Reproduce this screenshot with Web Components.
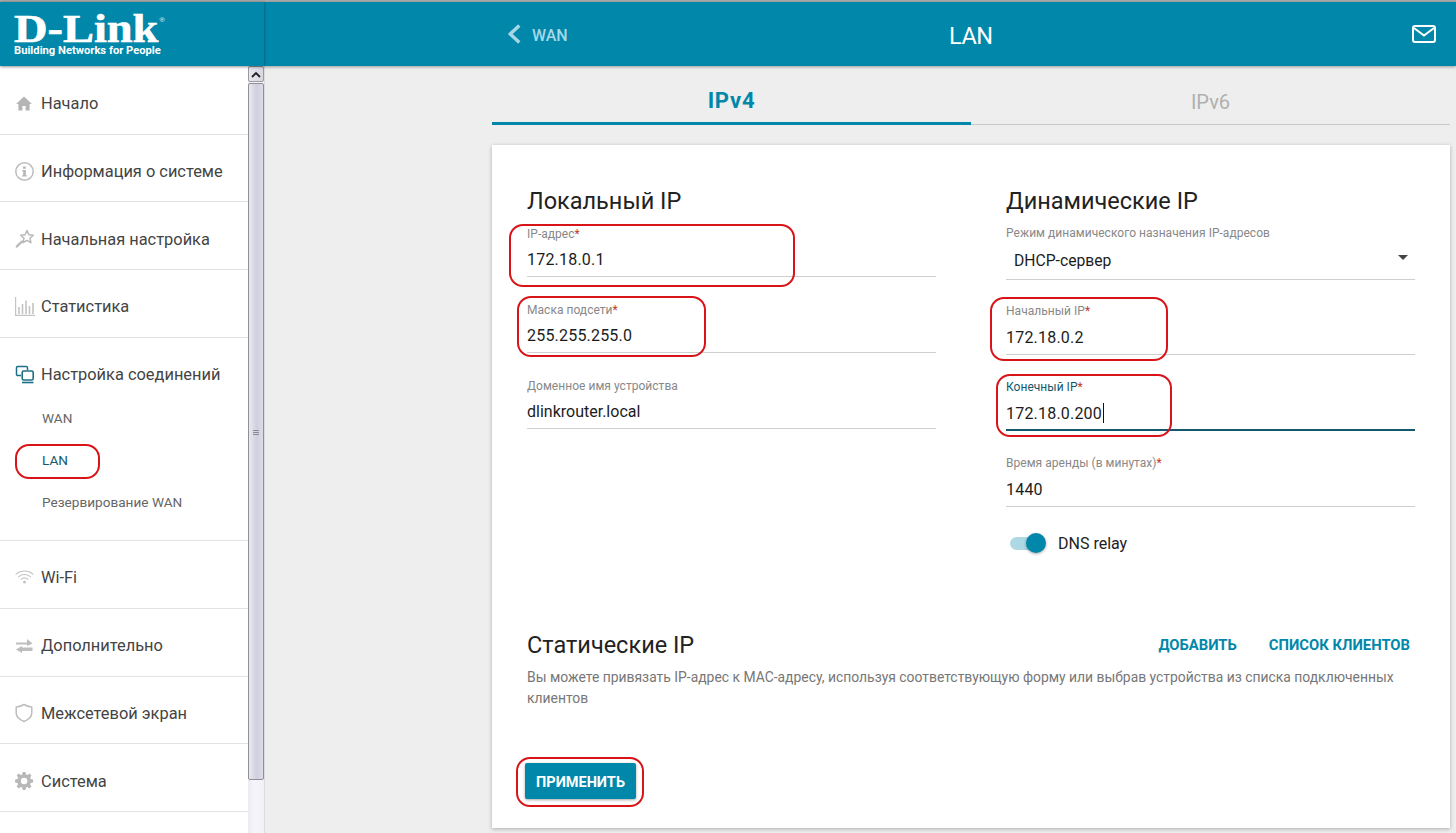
<!DOCTYPE html>
<html lang="ru">
<head>
<meta charset="utf-8">
<title>LAN</title>
<style>
  html, body { margin: 0; height: 100%; overflow: hidden; background: #eeeeee; }
  body { font-family: Roboto, "Noto Sans", sans-serif; position: relative; }
</style>
</head>
<body>
<router-app>
  <top-bar slot="top" back="WAN" title="LAN"></top-bar>

  <side-nav slot="nav">
    <nav-item label="Начало" icon="home"></nav-item>
    <nav-item label="Информация о системе" icon="info"></nav-item>
    <nav-item label="Начальная настройка" icon="star"></nav-item>
    <nav-item label="Статистика" icon="stats"></nav-item>
    <nav-item label="Настройка соединений" icon="conn" open>
      <nav-sub>WAN</nav-sub>
      <nav-sub active>LAN</nav-sub>
      <nav-sub>Резервирование WAN</nav-sub>
    </nav-item>
    <nav-item label="Wi-Fi" icon="wifi"></nav-item>
    <nav-item label="Дополнительно" icon="arrows"></nav-item>
    <nav-item label="Межсетевой экран" icon="shield"></nav-item>
    <nav-item label="Система" icon="gear"></nav-item>
  </side-nav>

  <tab-bar slot="main"></tab-bar>

  <form-card slot="main">
    <form-col slot="left" heading="Локальный IP">
      <form-field label="IP-адрес" required num>172.18.0.1</form-field>
      <form-field label="Маска подсети" required num>255.255.255.0</form-field>
      <form-field label="Доменное имя устройства">dlinkrouter.local</form-field>
    </form-col>
    <form-col slot="right" heading="Динамические IP" style="--extra:1px">
      <form-field label="Режим динамического назначения IP-адресов" select>DHCP-сервер</form-field>
      <form-field label="Начальный IP" required num>172.18.0.2</form-field>
      <form-field label="Конечный IP" required focused num>172.18.0.200</form-field>
      <form-field label="Время аренды (в минутах)" required num>1440</form-field>
      <toggle-switch>DNS relay</toggle-switch>
    </form-col>
  </form-card>

  <red-mark style="left:509px;top:224px;width:286px;height:63px"></red-mark>
  <red-mark style="left:517px;top:296px;width:189px;height:61px"></red-mark>
  <red-mark style="left:15px;top:444px;width:85px;height:35px"></red-mark>
  <red-mark style="left:990px;top:297px;width:178px;height:64px"></red-mark>
  <red-mark style="left:996px;top:374px;width:176px;height:63px"></red-mark>
  <red-mark style="left:516px;top:757px;width:128px;height:50px"></red-mark>
</router-app>

<script>
// menu icons, drawn on a 21x20 box
var ICONS = {
  home: '<path fill="#b5b5b5" d="M9 2.500 1 10h2.400v6.500h4v-4.400h3.200v4.400h4V10H17z"/>',
  info: '<circle cx="9.500" cy="9.500" r="8.700" fill="none" stroke="#bdbdbd" stroke-width="1.500"/><path fill="#b5b5b5" d="M8 4.500h2.800v2.200H8zM7.200 8h3.600v5.200h1v1.300H7.200v-1.300h1V9.300h-1z"/>',
  star: '<path fill="none" stroke="#b8b8b8" stroke-width="1.500" stroke-linejoin="round" d="M12 1.500l1.900 4.200 4.400.5-3.300 3 .9 4.500-3.900-2.300-3.900 2.300.9-4.500-3.300-3 4.400-.5z"/><path stroke="#b8b8b8" stroke-width="2.400" stroke-linecap="round" d="M1.800 17.500 7 12.500"/>',
  stats: '<path fill="none" stroke="#c4c4c4" stroke-width="1.200" d="M.6 0v18.400H20"/><path stroke="#c4c4c4" stroke-width="1.600" d="M4 17V10M7.500 17V7M11 17V3.500M14.500 17V9M18 17V6"/>',
  conn: '<path fill="none" stroke="#1d6f86" stroke-width="1.500" d="M6 10.500H2.800a1.300 1.300 0 0 1-1.300-1.300V2.800a1.300 1.300 0 0 1 1.300-1.300h8.400a1.300 1.300 0 0 1 1.300 1.300V5"/><rect x="7.200" y="6" width="11" height="9" rx="1.500" fill="none" stroke="#1d6f86" stroke-width="1.600"/><path stroke="#1d6f86" stroke-width="1.600" d="M7 17.500h11.500"/>',
  wifi: '<g fill="none" stroke="#c4c4c4" stroke-width="1.100" stroke-linecap="round"><path d="M1 6.200C5.800 2 13.200 2 18 6.200"/><path d="M3.500 8.800c3.500-3 8.500-3 12 0"/><path d="M6 11.300c2-1.700 5-1.700 7 0"/></g><circle cx="9.500" cy="14" r="1.500" fill="#c4c4c4"/>',
  arrows: '<path fill="#bdbdbd" d="M1 6.500h11V3l5.500 4.500L12 10V8.500H1zM17.500 11.500H7V10L1 13.500 7 17v-2h10.500z"/>',
  shield: '<path fill="none" stroke="#bdbdbd" stroke-width="1.500" stroke-linejoin="round" d="M9 1.500c2.300 1.500 4.800 2.200 7.800 2.400v6c0 4-3.300 6.500-7.800 8.600-4.500-2.100-7.800-4.600-7.800-8.600v-6C4.200 3.700 6.700 3 9 1.500z"/>',
  gear: '<path fill="#b8b8b8" fill-rule="evenodd" d="M7.400 0h3.200l.5 2.700 1.600.7L15 1.800l2.200 2.200-1.500 2.300.7 1.600 2.600.5v3.200l-2.600.5-.7 1.600 1.500 2.300-2.200 2.200-2.300-1.600-1.600.7-.5 2.700H7.400l-.5-2.700-1.600-.7L3 18.200.8 16l1.500-2.300-.7-1.600L-1 11.600V8.400l2.600-.5.7-1.600L.8 4 3 1.800l2.300 1.600 1.600-.7zM9 6.400a3.600 3.600 0 1 0 0 7.200 3.600 3.600 0 0 0 0-7.200z" transform="translate(1 1) scale(.9)"/>'
};

// PAGE SHELL
var tplApp = document.createElement("template");
tplApp.innerHTML = `
<style>
  :host { display: flex; flex-direction: column; height: 833px; position: relative; overflow: hidden; background: #eeeeee; }
  .strip { height: 2px; background: #a9a9a9; flex: none; }
  .body { display: flex; flex: 1; min-height: 0; }
  .side { width: 264px; flex: none; display: flex; background: #fff; }
  .main { flex: 1; min-width: 0; padding: 19px 6px 0 228px; box-sizing: border-box; }
  ::slotted(top-bar) { position: relative; z-index: 2; }
</style>
<div class="strip"></div>
<slot name="top"></slot>
<div class="body">
  <div class="side"><slot name="nav"></slot><side-scroll></side-scroll></div>
  <div class="main"><slot name="main"></slot></div>
</div>
<slot></slot>
`;
class RouterApp extends HTMLElement {
  constructor(){
    super();
    this.attachShadow({mode:"open"});
  }
  connectedCallback(){
    this.shadowRoot.appendChild(tplApp.content.cloneNode(true));
  }
}

// HEADER
var tplTop = document.createElement("template");
tplTop.innerHTML = `
<style>
  :host { display: flex; height: 64px; background: #0087aa; color: #fff; box-shadow: 0 1px 3px rgba(0,0,0,.35); flex: none; }
  .brand { width: 264px; box-sizing: border-box; padding: 11px 0 0 14px; flex: none; box-shadow: 1px 0 2px rgba(0,0,0,.22); }
  .logo { font: 700 40px/32px "Liberation Serif", serif; display: flex; align-items: flex-start; transform: scaleX(1.16); transform-origin: 0 0; -webkit-text-stroke: .6px #fff; }
  .logo sup { font: 400 6px/8px "Liberation Sans", sans-serif; margin: 3px 0 0 1px; -webkit-text-stroke: 0; }
  .tag { font: 700 11.200px/12px Roboto, sans-serif; white-space: nowrap; margin-top: 0; }
  .bar { flex: 1; display: flex; align-items: center; padding: 0 20px 0 243px; position: relative; }
  .back { display: flex; align-items: center; gap: 11px; color: #a5d8e6; font: 500 16px Roboto, sans-serif; }
  .back span { margin-top: 2px; }
  .title { flex: 1; text-align: center; font: 400 23.500px Roboto, sans-serif; letter-spacing: -.5px; padding: 3px 38px 0 0; }
  svg { display: block; }
</style>
<div class="brand">
  <div class="logo">D-Link<sup>®</sup></div>
  <div class="tag">Building Networks for People</div>
</div>
<div class="bar">
  <div class="back">
    <svg width="14" height="20" viewBox="0 0 14 20"><path d="M12.300 1.500 3.300 10l9 8.500" fill="none" stroke="#a5d8e6" stroke-width="3.400"/></svg>
    <span id="back"></span>
  </div>
  <div class="title" id="title"></div>
  <svg width="24" height="18" viewBox="0 0 24 18"><rect x="1" y="1" width="22" height="16" rx="2" fill="none" stroke="#fff" stroke-width="2"/><path d="M2 3l10 7.500L22 3" fill="none" stroke="#fff" stroke-width="2"/></svg>
</div>
`;
class TopBar extends HTMLElement {
  constructor(){
    super();
    this.attachShadow({mode:"open"});
  }
  connectedCallback(){
    this.shadowRoot.appendChild(tplTop.content.cloneNode(true));
    this.shadowRoot.querySelector("#back").textContent = this.getAttribute("back");
    this.shadowRoot.querySelector("#title").textContent = this.getAttribute("title");
  }
}

// SIDEBAR
var tplNav = document.createElement("template");
tplNav.innerHTML = `
<style>
  :host { display: flex; flex-direction: column; width: 248px; flex: none; background: #fff; padding-top: 1px; box-sizing: border-box; }
</style>
<slot></slot>
`;
class SideNav extends HTMLElement {
  constructor(){
    super();
    this.attachShadow({mode:"open"});
  }
  connectedCallback(){
    this.shadowRoot.appendChild(tplNav.content.cloneNode(true));
  }
}

var tplItem = document.createElement("template");
tplItem.innerHTML = `
<style>
  :host { display: block; border-bottom: 1px solid #e2e2e2; flex: none; box-sizing: border-box; height: 67.700px; }
  :host([open]) { height: 203.400px; }
  .row { display: flex; align-items: center; height: 66.700px; box-sizing: border-box; padding: 7px 0 0 15px; color: #444; font-size: 16.400px; }
  .ic { width: 26px; flex: none; display: flex; }
  svg { display: block; }
  .subs { margin-top: -7px; }
</style>
<div class="row"><span class="ic"><svg width="21" height="20" viewBox="0 0 21 20"></svg></span><span id="lbl"></span></div>
<div class="subs"><slot></slot></div>
`;
class NavItem extends HTMLElement {
  constructor(){
    super();
    this.attachShadow({mode:"open"});
  }
  connectedCallback(){
    this.shadowRoot.appendChild(tplItem.content.cloneNode(true));
    this.shadowRoot.querySelector("#lbl").textContent = this.getAttribute("label");
    this.shadowRoot.querySelector("svg").innerHTML = ICONS[this.getAttribute("icon")];
  }
}

var tplSub = document.createElement("template");
tplSub.innerHTML = `
<style>
  :host { display: flex; align-items: center; height: 42px; padding-left: 42px; color: #666; font-size: 13.600px; }
  :host([active]) { color: #14596b; }
</style>
<slot></slot>
`;
class NavSub extends HTMLElement {
  constructor(){
    super();
    this.attachShadow({mode:"open"});
  }
  connectedCallback(){
    this.shadowRoot.appendChild(tplSub.content.cloneNode(true));
  }
}

// the browser scrollbar beside the menu
var tplScroll = document.createElement("template");
tplScroll.innerHTML = `
<style>
  :host { display: flex; flex-direction: column; width: 16px; flex: none; background: linear-gradient(90deg,#ebebf3,#f5f5fb 40%,#f1f1f8); box-shadow: 1px 0 0 #dcdcdc; }
  .up { height: 16px; box-sizing: border-box; border: 1px solid #9a9a9f; border-radius: 2px; background: linear-gradient(90deg,#e6e6ee,#d8d8e4); display: flex; align-items: center; justify-content: center; }
  .thumb { height: 697px; margin-top: 1px; box-sizing: border-box; border: 1px solid #8f8f96; border-radius: 2px; background: linear-gradient(90deg,#e9e9f1,#cfcfdf 55%,#dcdce8); display: flex; align-items: center; justify-content: center; }
  .grip { width: 6px; height: 6px; background: repeating-linear-gradient(0deg,#8a8a94 0 1px,transparent 1px 2px); }
</style>
<div class="up"><svg width="10" height="7" viewBox="0 0 10 7"><path d="M1 6l4-4 4 4" fill="none" stroke="#222" stroke-width="1.800"/></svg></div>
<div class="thumb"><div class="grip"></div></div>
`;
class SideScroll extends HTMLElement {
  constructor(){
    super();
    this.attachShadow({mode:"open"});
  }
  connectedCallback(){
    this.shadowRoot.appendChild(tplScroll.content.cloneNode(true));
  }
}

// TABS
var tplTabs = document.createElement("template");
tplTabs.innerHTML = `
<style>
  :host { display: flex; height: 39px; border-bottom: 1px solid #c8c8c8; box-sizing: content-box; }
  div { flex: 1; text-align: center; font-size: 20px; line-height: 30px; color: #b0b0b0; }
  .on { color: #0087aa; font-weight: 700; font-size: 22px; letter-spacing: .8px; border-bottom: 3px solid #0087aa; margin-bottom: -1px; padding-top: 1px; box-sizing: border-box; line-height: 30px; }
  .off { padding-top: 3px; line-height: 29px; }
</style>
<div class="on">IPv4</div>
<div class="off">IPv6</div>
`;
class TabBar extends HTMLElement {
  constructor(){
    super();
    this.attachShadow({mode:"open"});
  }
  connectedCallback(){
    this.shadowRoot.appendChild(tplTabs.content.cloneNode(true));
  }
}

// CARD
var tplCard = document.createElement("template");
tplCard.innerHTML = `
<style>
  :host { display: block; margin-top: 20px; height: 683px; box-sizing: border-box; background: #fff; box-shadow: 0 1px 4px rgba(0,0,0,.28); padding: 39px 35px 0; }
  .cols { display: grid; grid-template-columns: 409px 409px; column-gap: 70px; height: 445px; }
  .head { display: flex; align-items: center; height: 32px; }
  h2 { margin: 0; font-size: 23.500px; font-weight: 400; line-height: 32px; color: #222; flex: 1; }
  .links { display: flex; gap: 32px; padding-right: 5px; }
  .links span { color: #0087aa; font-size: 14.800px; font-weight: 700; }
  p { margin: 6px 0 0; font-size: 13.900px; line-height: 21px; color: #777; }
  button { display: block; margin: 54px 0 0 -2px; width: 111px; height: 36px; border: 0; border-radius: 2px; background: #0087aa; color: #fff; font: 700 14.500px Roboto, sans-serif; box-shadow: 0 1px 3px rgba(0,0,0,.35); padding: 2px 0 0; }
</style>
<div class="cols"><slot name="left"></slot><slot name="right"></slot></div>
<div class="head"><h2>Статические IP</h2><div class="links"><span>ДОБАВИТЬ</span><span>СПИСОК КЛИЕНТОВ</span></div></div>
<p>Вы можете привязать IP-адрес к MAC-адресу, используя соответствующую форму или выбрав устройства из списка подключенных клиентов</p>
<button>ПРИМЕНИТЬ</button>
`;
class FormCard extends HTMLElement {
  constructor(){
    super();
    this.attachShadow({mode:"open"});
  }
  connectedCallback(){
    this.shadowRoot.appendChild(tplCard.content.cloneNode(true));
  }
}

var tplCol = document.createElement("template");
tplCol.innerHTML = `
<style>
  :host { display: block; }
  h2 { margin: 1px 0 10px; font-size: 23.500px; font-weight: 400; line-height: 32px; color: #222; }
</style>
<h2 id="h"></h2>
<slot></slot>
`;
class FormCol extends HTMLElement {
  constructor(){
    super();
    this.attachShadow({mode:"open"});
  }
  connectedCallback(){
    this.shadowRoot.appendChild(tplCol.content.cloneNode(true));
    this.shadowRoot.querySelector("#h").textContent = this.getAttribute("heading");
  }
}

// FIELD - label, value, underline
var tplField = document.createElement("template");
tplField.innerHTML = `
<style>
  :host { display: block; margin-bottom: calc(26px - var(--extra, 0px)); position: relative; }
  :host([select]) { margin-bottom: 24px; margin-top: -1px; }
  .lbl { font-size: 12px; line-height: 14px; color: #888; white-space: nowrap; letter-spacing: .03px; }
  .req { color: #c0392b; }
  .val { font-size: 16px; line-height: 24px; padding: calc(7px + var(--extra, 0px)) 0 4px; color: #1c1c1c; border-bottom: 1px solid #cfcfcf; }
  :host([num]) .val { letter-spacing: .2px; }
  :host([select]) .val { padding: 9px 0 6px 8px; font-size: 15.700px; }
  :host([focused]) .lbl { color: #14596b; }
  :host([focused]) .val { border-bottom: 2px solid #14596b; padding-bottom: 3px; }
  .caret { display: none; width: 1px; height: 20px; background: #111; margin-left: 1px; vertical-align: -4px; }
  :host([focused]) .caret { display: inline-block; }
  .arrow { display: none; position: absolute; right: 7px; top: 29px; width: 0; height: 0; border: 5px solid transparent; border-top: 5px solid #444; border-bottom: 0; }
  :host([select]) .arrow { display: block; }
</style>
<div class="lbl"><span id="l"></span><span class="req" id="r"></span></div>
<div class="val"><slot></slot><span class="caret"></span></div>
<span class="arrow"></span>
`;
class FormField extends HTMLElement {
  constructor(){
    super();
    this.attachShadow({mode:"open"});
  }
  connectedCallback(){
    this.shadowRoot.appendChild(tplField.content.cloneNode(true));
    this.shadowRoot.querySelector("#l").textContent = this.getAttribute("label");
    if (this.hasAttribute("required")) {
      this.shadowRoot.querySelector("#r").textContent = "*";
    }
  }
}

var tplToggle = document.createElement("template");
tplToggle.innerHTML = `
<style>
  :host { display: flex; align-items: center; padding-left: 4px; margin-top: -4px; height: 30px; font-size: 16px; color: #222; }
  .track { width: 30px; height: 13px; border-radius: 7px; background: #aed8e4; position: relative; margin-right: 18px; }
  .knob { position: absolute; right: -6px; top: -3.500px; width: 20px; height: 20px; border-radius: 50%; background: #0087aa; box-shadow: 0 1px 3px rgba(0,0,0,.35); }
</style>
<div class="track"><div class="knob"></div></div>
<slot></slot>
`;
class ToggleSwitch extends HTMLElement {
  constructor(){
    super();
    this.attachShadow({mode:"open"});
  }
  connectedCallback(){
    this.shadowRoot.appendChild(tplToggle.content.cloneNode(true));
  }
}

// red hand drawn boxes lying over the form
var tplMark = document.createElement("template");
tplMark.innerHTML = `
<style>
  :host { position: absolute; display: block; box-sizing: border-box; border: 2px solid #d81418; border-radius: 14px; pointer-events: none; z-index: 5; }
</style>
`;
class RedMark extends HTMLElement {
  constructor(){
    super();
    this.attachShadow({mode:"open"});
  }
  connectedCallback(){
    this.shadowRoot.appendChild(tplMark.content.cloneNode(true));
  }
}

customElements.define("router-app", RouterApp);
customElements.define("top-bar", TopBar);
customElements.define("side-nav", SideNav);
customElements.define("nav-item", NavItem);
customElements.define("nav-sub", NavSub);
customElements.define("side-scroll", SideScroll);
customElements.define("tab-bar", TabBar);
customElements.define("form-card", FormCard);
customElements.define("form-col", FormCol);
customElements.define("form-field", FormField);
customElements.define("toggle-switch", ToggleSwitch);
customElements.define("red-mark", RedMark);
</script>
</body>
</html>
